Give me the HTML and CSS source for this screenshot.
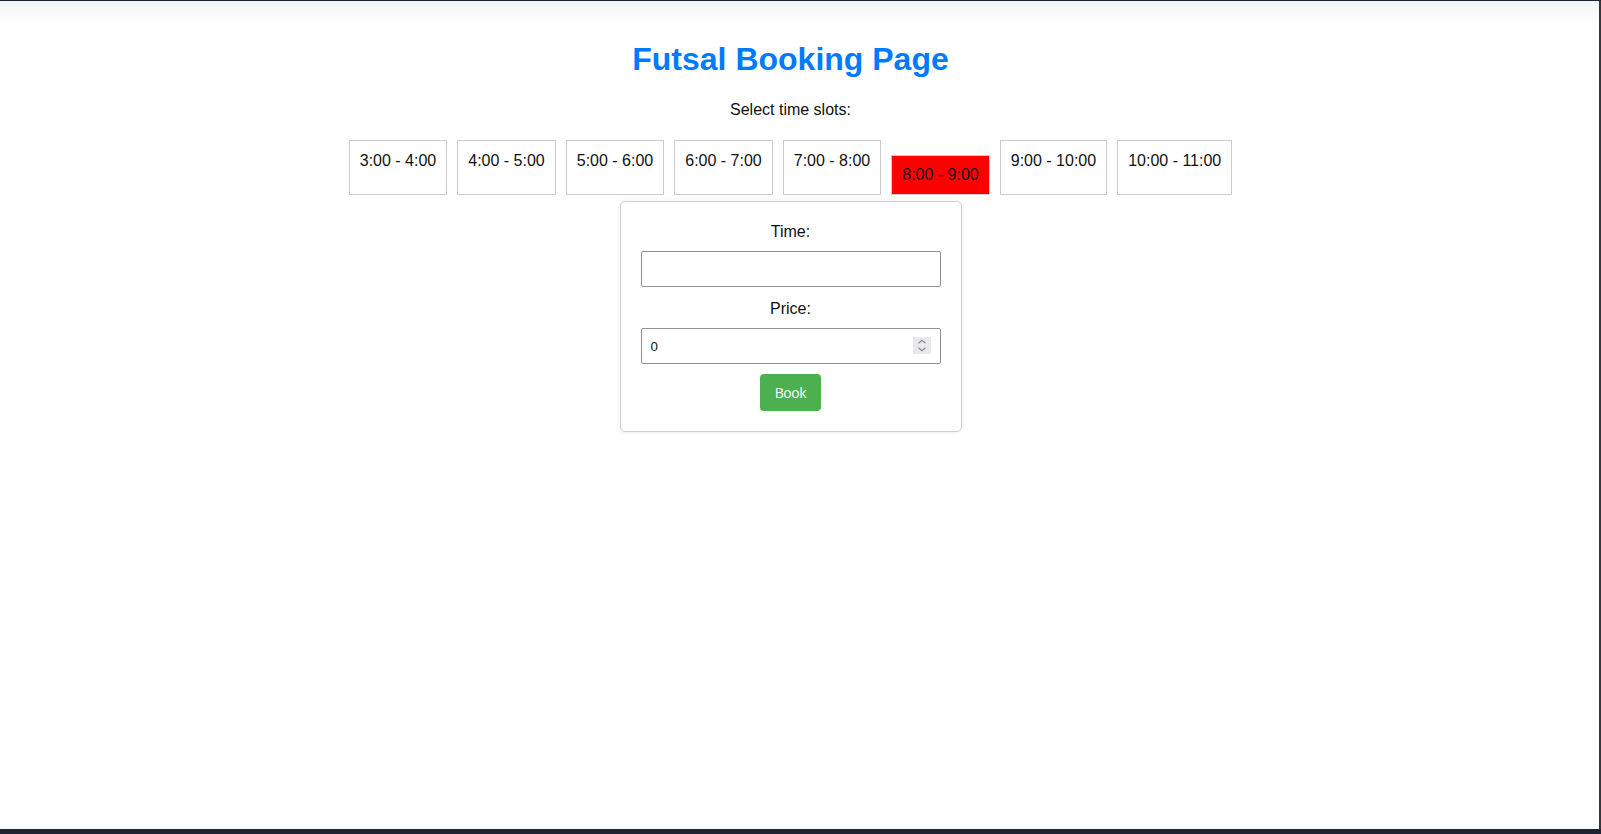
FILE: index.html
```html
<!DOCTYPE html>
<html lang="en">
<head>
<meta charset="utf-8">
<title>Futsal Booking Page</title>
<link rel="stylesheet" href="styles.css">
</head>
<body>
<div class="frame">
  <div class="page">
    <h1 class="title">Futsal Booking Page</h1>
    <p class="subtitle">Select time slots:</p>
    <div class="slots">
      <div class="slot">3:00 - 4:00</div>
      <div class="slot">4:00 - 5:00</div>
      <div class="slot">5:00 - 6:00</div>
      <div class="slot">6:00 - 7:00</div>
      <div class="slot">7:00 - 8:00</div>
      <div class="slot slot-booked">8:00 - 9:00</div>
      <div class="slot">9:00 - 10:00</div>
      <div class="slot">10:00 - 11:00</div>
    </div>
    <form class="card">
      <label class="field-label" for="time">Time:</label>
      <input class="field field-time" id="time" type="text">
      <label class="field-label" for="price">Price:</label>
      <div class="field-wrap">
        <input class="field field-price" id="price" type="number" value="0">
        <span class="spinner" aria-hidden="true">
          <svg width="18" height="17" viewBox="0 0 18 17">
            <path d="M5.5 6.2 L9 3.2 L12.5 6.2" fill="none" stroke="#8c8c94" stroke-width="1.2"/>
            <path d="M5.5 10.8 L9 13.8 L12.5 10.8" fill="none" stroke="#8c8c94" stroke-width="1.2"/>
          </svg>
        </span>
      </div>
      <button class="book-btn" type="button">Book</button>
    </form>
  </div>
</div>
</body>
</html>
```

FILE: styles.css
```css
html, body {
  margin: 0;
  padding: 0;
}

body {
  background: #1c2433;
  padding-top: 1px;
  height: 834px;
  box-sizing: border-box;
  font-family: "Liberation Sans", Arial, sans-serif;
  color: #111;
}

.frame {
  position: relative;
  width: 1599px;
  height: 828px;
  background: #fff;
  border-right: 2px solid #34373c;
  overflow: hidden;
}

.frame::before {
  content: "";
  position: absolute;
  left: 0;
  right: 0;
  top: 0;
  height: 22px;
  background: linear-gradient(to bottom, rgba(20, 30, 50, 0.05), rgba(20, 30, 50, 0));
  pointer-events: none;
}

.page {
  padding: 40px 18px 0 0;
  text-align: center;
}

.title {
  margin: 0;
  font-size: 32px;
  line-height: 37px;
  font-weight: bold;
  color: #007bff;
}

.subtitle {
  margin: 23px 0 16px;
  font-size: 16px;
  line-height: 18px;
}

.slots {
  display: flex;
  justify-content: center;
  align-items: flex-end;
}

.slot {
  margin: 5px;
  padding: 11px 10px 9px;
  height: 55px;
  box-sizing: border-box;
  border: 1px solid #ccc;
  background: #fff;
  font-size: 16px;
  line-height: 18px;
  color: #111;
  white-space: nowrap;
}

.slot-booked {
  height: 40px;
  padding: 10px;
  background: #ff0000;
}

.card {
  width: 342px;
  box-sizing: border-box;
  margin: 1px auto 0;
  padding: 20px 20px 20px;
  border: 1px solid #d0d0d0;
  border-radius: 5px;
  box-shadow: 0 0 4px rgba(0, 0, 0, 0.08);
  background: #fff;
}

.field-label {
  display: block;
  font-size: 16px;
  line-height: 19px;
  margin-bottom: 10px;
  color: #111;
}

.field {
  display: block;
  width: 300px;
  height: 36px;
  box-sizing: border-box;
  margin: 0 0 10px;
  padding: 0 9px;
  border: 1px solid #8f8f9d;
  border-radius: 2px;
  font-family: "Liberation Sans", Arial, sans-serif;
  font-size: 13.33px;
  color: #111;
  background: #fff;
}

.field-time {
  margin-bottom: 12px;
}

.field-wrap {
  position: relative;
  width: 300px;
}

.field-price {
  -moz-appearance: textfield;
}

.field-price::-webkit-inner-spin-button,
.field-price::-webkit-outer-spin-button {
  -webkit-appearance: none;
  margin: 0;
}

.spinner {
  position: absolute;
  top: 9px;
  right: 10px;
  width: 18px;
  height: 17px;
  background: #e9e9ed;
  display: flex;
}

.book-btn {
  display: block;
  margin: 0 auto;
  height: 37px;
  padding: 0 15px;
  border: none;
  border-radius: 4px;
  background: #4caf50;
  color: #fff;
  font-family: "Open Sans", "Noto Sans", sans-serif;
  font-size: 14px;
  letter-spacing: -0.4px;
}
```
